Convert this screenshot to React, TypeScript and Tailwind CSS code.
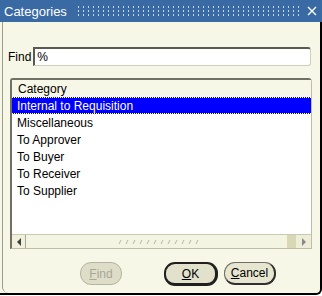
import React from "react";

const rows = ["Internal to Requisition", "Miscellaneous", "To Approver", "To Buyer", "To Receiver", "To Supplier"];

function Grip() {
  return (
    <svg width="86" height="6" viewBox="0 0 86 6">
      {Array.from({ length: 12 }).map((_, i) => (
        <line key={i} x1={i * 7 + 1} y1={5} x2={i * 7 + 3} y2={1} stroke="#b9b9a0" strokeWidth="1" />
      ))}
    </svg>
  );
}

export default function App() {
  return (
    <div className="w-[322px] h-[296px] bg-white overflow-hidden font-['Liberation_Sans',Arial,sans-serif] flex flex-col">
      {/* title bar */}
      <div className="h-[22px] bg-[#3a6aa3] flex items-center pl-[4px] pr-[5px] shrink-0">
        <span className="text-white text-[13px] leading-none">Categories</span>
        <div className="ml-[9px] flex-1 h-[12px] bg-[radial-gradient(circle,#c5d8ee_0.7px,transparent_1px)] bg-[length:5px_4px]" />
        <svg className="ml-[5px]" width="10" height="10" viewBox="0 0 10 10">
          <path d="M1 1 L9 9 M9 1 L1 9" stroke="white" strokeWidth="1.4" />
        </svg>
      </div>

      <div className="flex-1 bg-[#f7f7e7] flex flex-col border-r-2 border-b-2 border-black rounded-br-[6px] mb-[1px]">
        <div className="flex-1 border-l border-[#9c9c8c] ml-[2px] rounded-bl-[6px] flex flex-col">
          {/* find row */}
          <div className="flex items-center pl-[5px] mt-[25px] h-[19px]">
            <span className="text-[12px] text-black">Find</span>
            <div className="ml-[2px] w-[278px] h-[19px] bg-white border-l-2 border-t-2 border-[#5a5a50] border-r border-b border-r-[#cfcfbf] border-b-[#cfcfbf] rounded-r-[3px] flex items-center pl-[2px]">
              <span className="text-[12px] text-black">%</span>
            </div>
          </div>

          {/* list */}
          <div className="ml-[7px] mt-[12px] w-[302px] h-[171px] border-l-2 border-t-2 border-[#707064] border-r border-b border-r-[#bdbdaa] border-b-[#bdbdaa] rounded-tr-[4px] rounded-tl-[3px] bg-white flex flex-col">
            <div className="h-[17px] bg-[#f7f7e7] flex items-center pl-[6px] text-[12px] text-black shrink-0">Category</div>
            <div className="flex-1">
              {rows.map((r, i) => (
                <div
                  key={r}
                  className={
                    i === 0
                      ? "h-[17px] bg-[#0000ff] text-white text-[12px] flex items-center pl-[5px] border-y border-dotted border-white"
                      : "h-[17px] text-black text-[12px] flex items-center pl-[5px]"
                  }
                >
                  {r}
                </div>
              ))}
            </div>
            <div className="h-[14px] flex shrink-0 border-t border-[#c9c9b4] bg-[#f4f4e2]">
              <div className="w-[14px] border-r border-[#a9a996] flex items-center justify-center bg-[#f0f0dc]">
                <div className="w-0 h-0 border-y-[4px] border-y-transparent border-r-[4px] border-r-[#404040]" />
              </div>
              <div className="flex-1 flex items-center justify-center pl-[8px]">
                <Grip />
              </div>
              <div className="w-[9px] bg-[#d8d8b4]" />
              <div className="w-[15px] flex items-center justify-center bg-[#eeeed8]">
                <div className="w-0 h-0 border-y-[4px] border-y-transparent border-l-[4px] border-l-[#8a8a8a]" />
              </div>
            </div>
          </div>

          {/* buttons */}
          <div className="flex mt-[13px] h-[23px]">
            <div className="ml-[77px] w-[42px] h-[23px] rounded-[11px] border border-[#b4b4a0] bg-[#deddc8] flex items-center justify-center text-[12px] text-[#a8a898]">
              <span><u>F</u>ind</span>
            </div>
            <div className="ml-[42px] w-[54px] h-[24px] rounded-[11px] border-2 border-[#202020] border-r-[3px] border-b-[3px] bg-[#e2e2cc] flex items-center justify-center text-[12px] text-black">
              <span><u>O</u>K</span>
            </div>
            <div className="ml-[6px] w-[52px] h-[23px] rounded-[11px] border border-[#707068] border-r-2 border-b-2 border-r-[#303030] border-b-[#303030] bg-[#e6e6d0] flex items-center justify-center text-[12px] text-black">
              <span><u>C</u>ancel</span>
            </div>
          </div>
        </div>
      </div>
    </div>
  );
}
